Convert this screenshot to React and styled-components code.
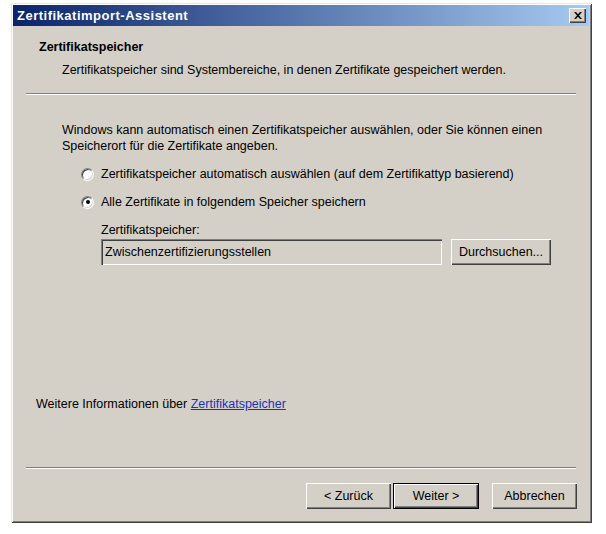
import React from "react"
import styled, { createGlobalStyle } from "styled-components"

const GlobalStyle = createGlobalStyle`
  body {
    margin: 0;
    background: #ffffff;
    font-family: "Liberation Sans", Arial, sans-serif;
    font-size: 12.5px;
    color: #000;
  }
`

const App = () => {
  return (
    <Page>
      <GlobalStyle />
      <Window>
        <TitleBar>
          <TitleText>Zertifikatimport-Assistent</TitleText>
          <CloseButton aria-label="Schließen">
            <svg width="8" height="7" viewBox="0 0 8 7">
              <path d="M0 0h2l2 2.2L6 0h2L5 3.5 8 7H6L4 4.8 2 7H0l3-3.5z" fill="#000" />
            </svg>
          </CloseButton>
        </TitleBar>

        {/* Header */}
        <Header>
          <HeaderTitle>Zertifikatspeicher</HeaderTitle>
          <HeaderText>
            Zertifikatspeicher sind Systembereiche, in denen Zertifikate gespeichert werden.
          </HeaderText>
        </Header>
        <Separator />

        {/* Content */}
        <Content>
          <Intro>
            Windows kann automatisch einen Zertifikatspeicher auswählen, oder Sie können einen
            <br />
            Speicherort für die Zertifikate angeben.
          </Intro>

          <RadioRow>
            <Radio />
            <span>Zertifikatspeicher automatisch auswählen (auf dem Zertifikattyp basierend)</span>
          </RadioRow>
          <RadioRow>
            <Radio checked />
            <span>Alle Zertifikate in folgendem Speicher speichern</span>
          </RadioRow>

          <StoreBlock>
            <FieldLabel>Zertifikatspeicher:</FieldLabel>
            <FieldRow>
              <TextBox>Zwischenzertifizierungsstellen</TextBox>
              <Button $width={100}>Durchsuchen...</Button>
            </FieldRow>
          </StoreBlock>
        </Content>

        <MoreInfo>
          Weitere Informationen über <InfoLink href="#">Zertifikatspeicher</InfoLink>
        </MoreInfo>

        <Separator />

        {/* Bottom buttons */}
        <Footer>
          <Button $width={85}>&lt; Zurück</Button>
          <Button $width={86} $default>Weiter &gt;</Button>
          <Gap />
          <Button $width={85}>Abbrechen</Button>
        </Footer>
      </Window>
    </Page>
  )
}

const Page = styled.div`
  padding: 3px 0 0 11px;
`

const Window = styled.div`
  box-sizing: border-box;
  width: 581px;
  height: 520px;
  padding: 2px 3px 3px 2px;
  background: #d4d0c8;
  display: flex;
  flex-direction: column;
  box-shadow:
    inset 1px 1px 0 #e8e6e0,
    inset -1px -1px 0 #404040,
    inset 2px 2px 0 #ffffff,
    inset -2px -2px 0 #808080;
`

const TitleBar = styled.div`
  height: 21px;
  display: flex;
  align-items: center;
  justify-content: space-between;
  padding: 0 3px 0 4px;
  background: linear-gradient(to right, #0a246a, #a6caf0);
`

const TitleText = styled.span`
  color: #fff;
  font-weight: bold;
  font-size: 13px;
  letter-spacing: 0.5px;
`

const CloseButton = styled.div`
  box-sizing: border-box;
  width: 17px;
  height: 15px;
  display: flex;
  align-items: center;
  justify-content: center;
  background: #d4d0c8;
  box-shadow:
    inset 1px 1px 0 #ffffff,
    inset -1px -1px 0 #404040,
    inset -2px -2px 0 #808080;
`

const Header = styled.div`
  padding: 14px 0 0 26px;
  height: 67px;
  box-sizing: border-box;
  display: flex;
  flex-direction: column;
`

const HeaderTitle = styled.div`
  font-weight: bold;
  line-height: 15px;
`

const HeaderText = styled.div`
  margin: 8px 0 0 23px;
  line-height: 15px;
`

const Separator = styled.div`
  margin: 0 13px;
  height: 0;
  border-top: 1px solid #808080;
  border-bottom: 1px solid #ffffff;
`

const Content = styled.div`
  padding: 27px 0 0 49px;
  display: flex;
  flex-direction: column;
`

const Intro = styled.p`
  margin: 0;
  line-height: 16px;
`

const RadioRow = styled.div`
  display: flex;
  align-items: center;
  gap: 7px;
  height: 16px;
  margin: 12px 0 0 19px;
  & + & {
    margin-top: 12px;
  }
`

const Radio = styled.span`
  box-sizing: border-box;
  width: 13px;
  height: 13px;
  border-radius: 50%;
  background: #fff;
  border: 1px solid;
  border-color: #808080 #ffffff #ffffff #808080;
  box-shadow: inset 1px 1px 0 #404040, inset -1px -1px 0 #d4d0c8;
  position: relative;
  flex: none;
  &::after {
    content: "";
    display: ${p => (p.checked ? "block" : "none")};
    position: absolute;
    left: 3.5px;
    top: 3.5px;
    width: 4px;
    height: 4px;
    border-radius: 50%;
    background: #000;
  }
`

const StoreBlock = styled.div`
  margin: 12px 0 0 39px;
  display: flex;
  flex-direction: column;
`

const FieldLabel = styled.div`
  line-height: 16px;
`

const FieldRow = styled.div`
  display: flex;
  align-items: center;
  gap: 9px;
  margin: 1px 0 0 0;
`

const TextBox = styled.div`
  box-sizing: border-box;
  width: 341px;
  height: 26px;
  padding: 0 4px;
  display: flex;
  align-items: center;
  background: #d4d0c8;
  box-shadow:
    inset 1px 1px 0 #808080,
    inset 2px 2px 0 #404040,
    inset -1px -1px 0 #ffffff,
    inset -2px -2px 0 #d4d0c8;
`

const Button = styled.div`
  box-sizing: border-box;
  width: ${p => p.$width}px;
  height: 26px;
  display: flex;
  align-items: center;
  justify-content: center;
  background: #d4d0c8;
  box-shadow: ${p =>
    p.$default
      ? "inset 0 0 0 1px #000, inset 2px 2px 0 #ffffff, inset -2px -2px 0 #404040, inset -3px -3px 0 #808080"
      : "inset 1px 1px 0 #ffffff, inset -1px -1px 0 #404040, inset -2px -2px 0 #808080"};
`

const MoreInfo = styled.div`
  margin: auto 0 55px 23px;
  line-height: 16px;
`

const InfoLink = styled.a`
  color: #1a33b8;
  text-decoration: underline;
`

const Footer = styled.div`
  display: flex;
  justify-content: flex-end;
  gap: 2px;
  padding: 14px 12px 0 0;
  height: 51px;
  box-sizing: border-box;
`

const Gap = styled.span`
  width: 9px;
`

export default App
